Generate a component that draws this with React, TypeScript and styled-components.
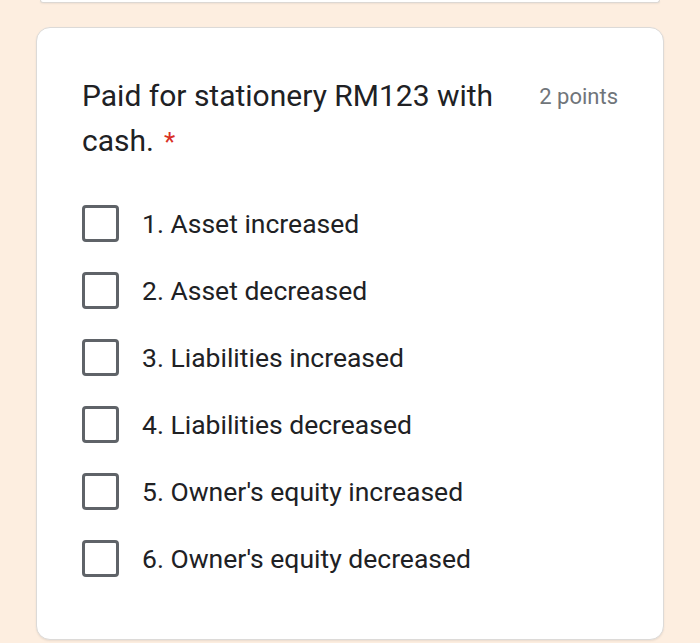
import React from "react";
import styled, { createGlobalStyle } from "styled-components";

const Global = createGlobalStyle`
  html, body {
    margin: 0;
    padding: 0;
    background: #fdeee0;
  }
  body {
    font-family: Roboto, "Noto Sans", Arial, sans-serif;
    -webkit-font-smoothing: antialiased;
  }
`;

const Page = styled.div`
  width: 700px;
  height: 643px;
  overflow: hidden;
  background: #fdeee0;
  display: flex;
  flex-direction: column;
  align-items: center;
  gap: 24px;
`;

const PrevCardEnd = styled.div`
  width: 618px;
  height: 2px;
  background: #ffffff;
  border: 1px solid #dcd8d4;
  border-top: none;
  border-radius: 0 0 12px 12px;
  box-shadow: 0 1px 2px rgba(0, 0, 0, 0.06);
`;

const Card = styled.div`
  box-sizing: border-box;
  width: 628px;
  height: 613px;
  background: #ffffff;
  border: 1px solid #dcdad8;
  border-radius: 14px;
  box-shadow: 0 1px 2px rgba(0, 0, 0, 0.08);
  padding: 45px 45px 0 45px;
  display: flex;
  flex-direction: column;
`;

const Header = styled.div`
  display: flex;
  align-items: flex-start;
  justify-content: space-between;
  gap: 24px;
`;

const Title = styled.div`
  flex: 1;
  font-size: 30px;
  line-height: 45px;
  color: #202124;
`;

const Required = styled.span`
  display: inline-block;
  color: #d93025;
  margin-left: 10px;
  font-size: 26px;
  line-height: 26px;
`;

const Points = styled.div`
  font-size: 22px;
  line-height: 47px;
  color: #70757a;
  white-space: nowrap;
`;

const Options = styled.div`
  display: flex;
  flex-direction: column;
  margin-top: 27px;
`;

const Option = styled.label`
  display: flex;
  align-items: center;
  height: 67px;
  gap: 23px;
  cursor: pointer;
`;

const Box = styled.span`
  box-sizing: border-box;
  width: 37px;
  height: 37px;
  border: 3.5px solid #5f6368;
  border-radius: 4px;
  flex-shrink: 0;
`;

const OptionText = styled.span`
  font-size: 26.5px;
  line-height: 32px;
  color: #202124;
`;

const options = [
  "1. Asset increased",
  "2. Asset decreased",
  "3. Liabilities increased",
  "4. Liabilities decreased",
  "5. Owner's equity increased",
  "6. Owner's equity decreased",
];

export default function App() {
  return (
    <>
      <Global />
      <Page>
        <PrevCardEnd />
        <Card>
          <Header>
            <Title>
              Paid for stationery RM123 with cash.<Required>*</Required>
            </Title>
            <Points>2 points</Points>
          </Header>
          <Options>
            {options.map((o) => (
              <Option key={o}>
                <Box />
                <OptionText>{o}</OptionText>
              </Option>
            ))}
          </Options>
        </Card>
      </Page>
    </>
  );
}
